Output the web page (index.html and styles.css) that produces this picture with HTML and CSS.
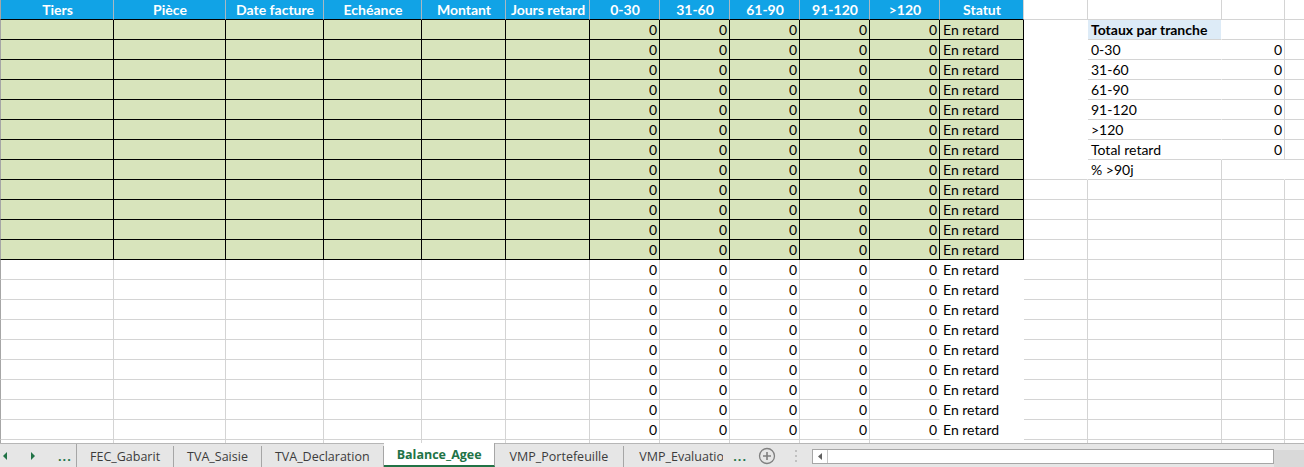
FILE: index.html
```html
<!DOCTYPE html>
<html lang="fr">
  <head>
    <meta charset="UTF-8" />
    <title>Balance_Agee</title>
    <link rel="stylesheet" href="styles.css">
  </head>
  <body>
    <div class="sheet">
      <table class="grid">
        <colgroup>
          <col class="c-tiers"><col class="c-piece"><col class="c-date"><col class="c-date">
          <col class="c-mid"><col class="c-mid">
          <col class="c-num"><col class="c-num"><col class="c-num"><col class="c-num"><col class="c-num">
          <col class="c-mid"><col class="c-j"><col class="c-k"><col class="c-l"><col class="c-m">
        </colgroup>
        <tr class="head">
          <th>Tiers</th><th>Pièce</th><th>Date facture</th><th>Echéance</th><th>Montant</th><th>Jours retard</th>
          <th>0-30</th><th>31-60</th><th>61-90</th><th>91-120</th><th>&gt;120</th><th class="last">Statut</th>
          <td></td><td></td><td></td><td></td>
        </tr>
        <!-- lignes vertes -->
        <tr class="g">
          <td></td><td></td><td></td><td></td><td></td><td></td>
          <td class="n">0</td><td class="n">0</td><td class="n">0</td><td class="n">0</td><td class="n">0</td><td>En retard</td>
          <td class="nb nr"></td><td class="tot-head nr">Totaux par tranche</td><td></td><td></td>
        </tr>
        <tr class="g">
          <td></td><td></td><td></td><td></td><td></td><td></td>
          <td class="n">0</td><td class="n">0</td><td class="n">0</td><td class="n">0</td><td class="n">0</td><td>En retard</td>
          <td class="nb nr"></td><td class="nr">0-30</td><td class="n">0</td><td></td>
        </tr>
        <tr class="g">
          <td></td><td></td><td></td><td></td><td></td><td></td>
          <td class="n">0</td><td class="n">0</td><td class="n">0</td><td class="n">0</td><td class="n">0</td><td>En retard</td>
          <td class="nb nr"></td><td class="nr">31-60</td><td class="n">0</td><td></td>
        </tr>
        <tr class="g">
          <td></td><td></td><td></td><td></td><td></td><td></td>
          <td class="n">0</td><td class="n">0</td><td class="n">0</td><td class="n">0</td><td class="n">0</td><td>En retard</td>
          <td class="nb nr"></td><td class="nr">61-90</td><td class="n">0</td><td></td>
        </tr>
        <tr class="g">
          <td></td><td></td><td></td><td></td><td></td><td></td>
          <td class="n">0</td><td class="n">0</td><td class="n">0</td><td class="n">0</td><td class="n">0</td><td>En retard</td>
          <td class="nb nr"></td><td class="nr">91-120</td><td class="n">0</td><td></td>
        </tr>
        <tr class="g">
          <td></td><td></td><td></td><td></td><td></td><td></td>
          <td class="n">0</td><td class="n">0</td><td class="n">0</td><td class="n">0</td><td class="n">0</td><td>En retard</td>
          <td class="nb nr"></td><td class="nr">&gt;120</td><td class="n">0</td><td></td>
        </tr>
        <tr class="g">
          <td></td><td></td><td></td><td></td><td></td><td></td>
          <td class="n">0</td><td class="n">0</td><td class="n">0</td><td class="n">0</td><td class="n">0</td><td>En retard</td>
          <td class="nb nr"></td><td class="nr">Total retard</td><td class="n">0</td><td></td>
        </tr>
        <tr class="g">
          <td></td><td></td><td></td><td></td><td></td><td></td>
          <td class="n">0</td><td class="n">0</td><td class="n">0</td><td class="n">0</td><td class="n">0</td><td>En retard</td>
          <td class="nr"></td><td>% &gt;90j</td><td class="nr"></td><td></td>
        </tr>
        <tr class="g">
          <td></td><td></td><td></td><td></td><td></td><td></td>
          <td class="n">0</td><td class="n">0</td><td class="n">0</td><td class="n">0</td><td class="n">0</td><td>En retard</td>
          <td></td><td></td><td></td><td></td>
        </tr>
        <tr class="g">
          <td></td><td></td><td></td><td></td><td></td><td></td>
          <td class="n">0</td><td class="n">0</td><td class="n">0</td><td class="n">0</td><td class="n">0</td><td>En retard</td>
          <td></td><td></td><td></td><td></td>
        </tr>
        <tr class="g">
          <td></td><td></td><td></td><td></td><td></td><td></td>
          <td class="n">0</td><td class="n">0</td><td class="n">0</td><td class="n">0</td><td class="n">0</td><td>En retard</td>
          <td></td><td></td><td></td><td></td>
        </tr>
        <tr class="g">
          <td></td><td></td><td></td><td></td><td></td><td></td>
          <td class="n">0</td><td class="n">0</td><td class="n">0</td><td class="n">0</td><td class="n">0</td><td>En retard</td>
          <td></td><td></td><td></td><td></td>
        </tr>
        <!-- lignes blanches -->
        <tr>
          <td></td><td></td><td></td><td></td><td></td><td></td>
          <td class="n">0</td><td class="n">0</td><td class="n">0</td><td class="n">0</td><td class="n nr">0</td><td class="nr nb">En retard</td>
          <td></td><td></td><td></td><td></td>
        </tr>
        <tr>
          <td></td><td></td><td></td><td></td><td></td><td></td>
          <td class="n">0</td><td class="n">0</td><td class="n">0</td><td class="n">0</td><td class="n nr">0</td><td class="nr nb">En retard</td>
          <td></td><td></td><td></td><td></td>
        </tr>
        <tr>
          <td></td><td></td><td></td><td></td><td></td><td></td>
          <td class="n">0</td><td class="n">0</td><td class="n">0</td><td class="n">0</td><td class="n nr">0</td><td class="nr nb">En retard</td>
          <td></td><td></td><td></td><td></td>
        </tr>
        <tr>
          <td></td><td></td><td></td><td></td><td></td><td></td>
          <td class="n">0</td><td class="n">0</td><td class="n">0</td><td class="n">0</td><td class="n nr">0</td><td class="nr nb">En retard</td>
          <td></td><td></td><td></td><td></td>
        </tr>
        <tr>
          <td></td><td></td><td></td><td></td><td></td><td></td>
          <td class="n">0</td><td class="n">0</td><td class="n">0</td><td class="n">0</td><td class="n nr">0</td><td class="nr nb">En retard</td>
          <td></td><td></td><td></td><td></td>
        </tr>
        <tr>
          <td></td><td></td><td></td><td></td><td></td><td></td>
          <td class="n">0</td><td class="n">0</td><td class="n">0</td><td class="n">0</td><td class="n nr">0</td><td class="nr nb">En retard</td>
          <td></td><td></td><td></td><td></td>
        </tr>
        <tr>
          <td></td><td></td><td></td><td></td><td></td><td></td>
          <td class="n">0</td><td class="n">0</td><td class="n">0</td><td class="n">0</td><td class="n nr">0</td><td class="nr nb">En retard</td>
          <td></td><td></td><td></td><td></td>
        </tr>
        <tr>
          <td></td><td></td><td></td><td></td><td></td><td></td>
          <td class="n">0</td><td class="n">0</td><td class="n">0</td><td class="n">0</td><td class="n nr">0</td><td class="nr nb">En retard</td>
          <td></td><td></td><td></td><td></td>
        </tr>
        <tr>
          <td></td><td></td><td></td><td></td><td></td><td></td>
          <td class="n">0</td><td class="n">0</td><td class="n">0</td><td class="n">0</td><td class="n nr">0</td><td class="nr nb">En retard</td>
          <td></td><td></td><td></td><td></td>
        </tr>
        <tr>
          <td></td><td></td><td></td><td></td><td></td><td></td>
          <td></td><td></td><td></td><td></td><td class="nr"></td><td class="nr nb"></td>
          <td></td><td></td><td></td><td></td>
        </tr>
      </table>
    </div>

    <!-- barre des onglets -->
    <div class="tabbar">
      <div class="tab-nav">
        <svg class="nav-arrow" width="5" height="8" viewBox="0 0 5 8"><path d="M4 0 L0 4 L4 8 Z" fill="#217346"/></svg>
        <svg class="nav-arrow" width="5" height="8" viewBox="0 0 5 8"><path d="M0 0 L4 4 L0 8 Z" fill="#217346"/></svg>
        <span class="more">...</span>
      </div>
      <div class="tab">FEC_Gabarit</div>
      <div class="tab">TVA_Saisie</div>
      <div class="tab">TVA_Declaration</div>
      <div class="tab active">Balance_Agee</div>
      <div class="tab">VMP_Portefeuille</div>
      <div class="tab clipped">VMP_Evaluation</div>
      <span class="more more-right">...</span>
      <svg class="add" width="18" height="18" viewBox="0 0 18 18">
        <circle cx="9" cy="9" r="7.5" fill="none" stroke="#7f7f7f" stroke-width="1.3"/>
        <path d="M9 5 V13 M5 9 H13" stroke="#7f7f7f" stroke-width="1.6"/>
      </svg>
      <svg class="grip" width="3" height="14" viewBox="0 0 3 14">
        <rect x="0" y="1" width="2" height="2" fill="#c0c0c0"/>
        <rect x="0" y="6" width="2" height="2" fill="#c0c0c0"/>
        <rect x="0" y="11" width="2" height="2" fill="#c0c0c0"/>
      </svg>
      <div class="hscroll">
        <div class="hscroll-btn">
          <svg width="4" height="7" viewBox="0 0 4 7"><path d="M4 0 L0 3.5 L4 7 Z" fill="#606060"/></svg>
        </div>
      </div>
      <div class="corner"></div>
    </div>
  </body>
</html>
```

FILE: styles.css
```css
/* Page */
body {
  margin: 0;
  width: 1304px;
  height: 467px;
  overflow: hidden;
  background: #fff;
  font-family: Lato, "Noto Sans", sans-serif;
}

/* Zone de la feuille */
.sheet {
  height: 443px;
  overflow: hidden;
}

.grid {
  table-layout: fixed;
  border-collapse: separate;
  border-spacing: 0;
  width: 1325px;
  font-size: 14px;
  color: #000;
}

.c-tiers { width: 114px; }
.c-piece { width: 112px; }
.c-date { width: 98px; }
.c-mid { width: 84px; }
.c-num { width: 70px; }
.c-j { width: 64px; }
.c-k { width: 134px; }
.c-l { width: 63px; }
.c-m { width: 40px; }

.grid td,
.grid th {
  height: 19px;
  padding: 0 2px 0 3px;
  line-height: 19px;
  border-right: 1px solid #d4d4d4;
  border-bottom: 1px solid #d4d4d4;
  white-space: nowrap;
  overflow: hidden;
  text-align: left;
}

.grid tr > :first-child {
  border-left: 1px solid #a6a6a6;
}

/* En-tete bleu */
.head th {
  background: #11a3e6;
  color: #fff;
  font-weight: bold;
  text-align: center;
  border-right-color: #a9b8c2;
  border-bottom-color: #000;
}

.head th.last {
  border-right-color: #d4d4d4;
}

/* Lignes vertes */
.g td:nth-child(-n+12) {
  background: #d8e4bc;
  border-right-color: #000;
  border-bottom-color: #000;
}

.grid td.n {
  text-align: right;
}

.grid td.nb {
  border-bottom-color: #fff;
}

.grid td.nr {
  border-right-color: #fff;
}

.grid td.tot-head {
  background: #ddebf7;
  font-weight: bold;
}

/* Barre des onglets */
.tabbar {
  display: flex;
  align-items: stretch;
  height: 23px;
  border-top: 1px solid #b6b6b6;
  background: #e6e6e6;
  font-family: "Open Sans", "Noto Sans", sans-serif;
  font-size: 12.5px;
  color: #3c3c3c;
}

.tab-nav {
  width: 76px;
  border-right: 1px solid #a6a6a6;
  display: flex;
  align-items: center;
}

.nav-arrow {
  margin-left: 3px;
  margin-right: 20px;
}

.more {
  color: #217346;
  font-weight: bold;
  letter-spacing: 1px;
  line-height: 1;
}

.tab-nav .more {
  margin-left: 2px;
  margin-top: 4px;
}

.tab {
  display: flex;
  align-items: center;
  padding: 0 13px;
  border-right: 1px solid #a6a6a6;
  margin-top: 2px;
}

.tab.active {
  margin-top: -1px;
  background: #fff;
  color: #217346;
  font-weight: bold;
  padding: 0 12px 0 13px;
  border-bottom: 2px solid #217346;
}

.tab.active + .tab {
  padding: 0 15px;
}

.tab.clipped {
  border-right: none;
  width: 84px;
  overflow: hidden;
  white-space: nowrap;
  padding-left: 15px;
  padding-right: 0;
  justify-content: flex-start;
}

.more-right {
  align-self: center;
  margin: 4px 0 0 10px;
}

.add {
  align-self: center;
  margin-left: 11px;
}

.grip {
  align-self: center;
  margin-left: 19px;
}

.hscroll {
  align-self: center;
  margin-left: 14px;
  margin-top: 2px;
  width: 460px;
  height: 13px;
  border: 1px solid #a6a6a6;
  background: #fff;
  display: flex;
}

.hscroll-btn {
  width: 14px;
  border-right: 1px solid #c6c6c6;
  display: flex;
  align-items: center;
  justify-content: center;
}

.corner {
  flex: 1;
  margin-top: 6px;
  background: #d9d9d9;
}
```
